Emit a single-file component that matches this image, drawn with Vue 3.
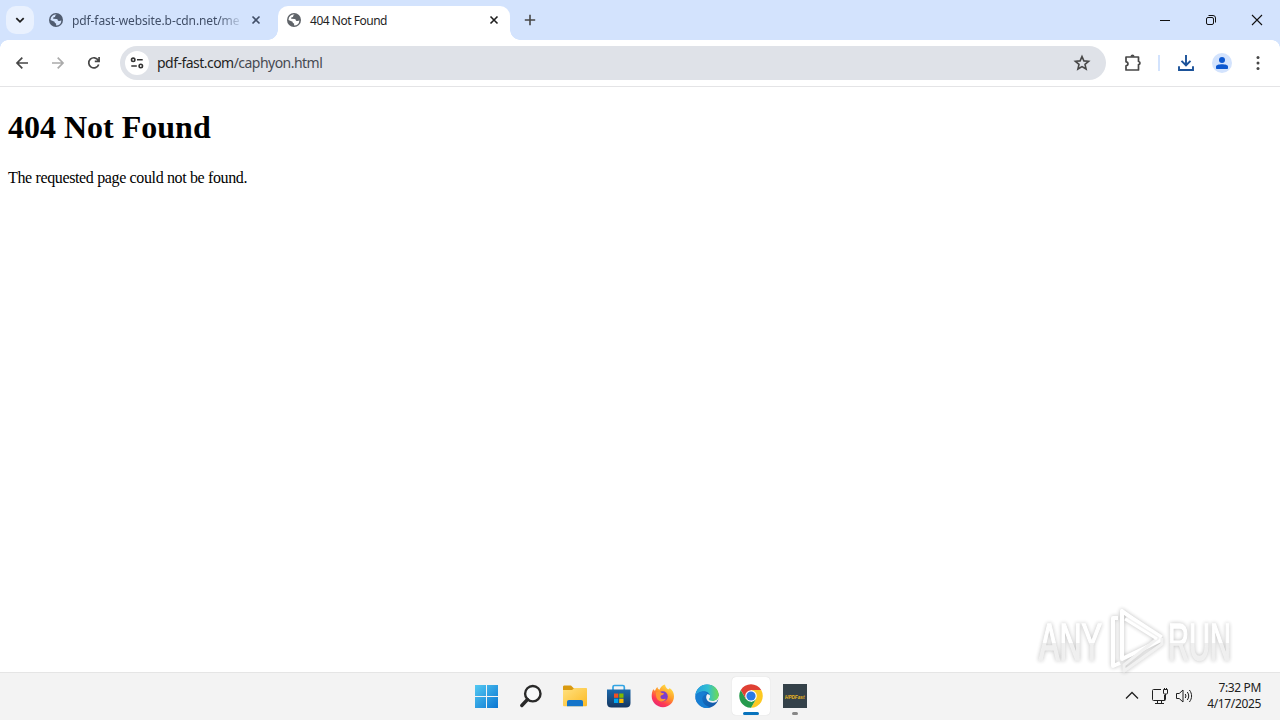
<template>
  <div class="desktop">
    <header class="tab-strip">
      <button class="tab-search">
        <svg width="28" height="28" viewBox="0 0 28 28"><path d="M10.3 12.2 14 15.8l3.7-3.6" fill="none" stroke="#1f1f1f" stroke-width="1.8" /></svg>
      </button>
      <div v-for="tab in tabs" :key="tab.title" class="tab" :class="{ active: tab.active }">
        <svg class="favicon" width="14" height="14" viewBox="0 0 14 14">
          <circle cx="7" cy="7" r="7" :fill="tab.active ? '#5f6368' : '#505c70'" />
          <path d="M7.7 1.5c-1.2.6-1.7 1.3-1.6 2.4l-1.3.4c-.7.2-.8 1-.5 1.5l3.3.3c1 .1 1.3.8 1.3 1.6l1.2.3c.7.2 1.2-.3 2.3-.5a5.5 5.5 0 0 1-5.3 5v-1.9c-1-.2-1.5-.8-1.5-1.8L1.5 6.900a5.500 5.500 0 0 1 6.200-5.400z" :fill="tab.active ? '#fff' : '#d3e3fd'" />
        </svg>
        <span class="title">{{ tab.title }}</span>
        <svg class="close" width="16" height="16" viewBox="0 0 16 16"><path d="m4.500 4.500 7 7m0-7-7 7" stroke-width="1.600" stroke="currentColor" /></svg>
      </div>
      <button class="new-tab">
        <svg width="28" height="28" viewBox="0 0 28 28"><path d="M14 8.800v10.400M8.800 14h10.400" stroke="#474747" stroke-width="1.600" /></svg>
      </button>
      <div class="window-controls">
        <svg width="46" height="40" viewBox="0 0 46 40"><path d="M18 20.500h10" stroke="#111" /></svg>
        <svg width="46" height="40" viewBox="0 0 46 40" fill="none" stroke="#111"><rect x="18.500" y="17.500" width="7" height="7" rx="1.500" /><path d="M20.500 15.500h4.500a2.500 2.500 0 0 1 2.500 2.500v4.500" /></svg>
        <svg width="46" height="40" viewBox="0 0 46 40"><path d="m18 15 10 10m0-10L18 25" stroke="#111" stroke-width="1.100" /></svg>
      </div>
    </header>

    <nav class="toolbar">
      <svg width="36" height="36" viewBox="0 0 36 36" fill="none" stroke="#474747" stroke-width="1.700"><path d="M24 18H13m5.300-5.300L13 18l5.300 5.300" /></svg>
      <svg width="36" height="36" viewBox="0 0 36 36" fill="none" stroke="#ababab" stroke-width="1.700"><path d="M12 18h11m-5.300-5.300L23 18l-5.300 5.300" /></svg>
      <svg width="36" height="36" viewBox="0 0 36 36" fill="none" stroke="#474747" stroke-width="1.700"><path d="M22.700 19.500a5.100 5.100 0 1 1-.4-4.200M23.100 12v4.300h-4.300" /></svg>
      <div class="omnibox">
        <div class="site-info">
          <svg width="24" height="24" viewBox="0 0 24 24" fill="none" stroke="#333" stroke-width="1.600"><circle cx="8.200" cy="8.800" r="1.700" /><path d="M12 8.800h5.700M6.300 15h5.500" /><circle cx="15.800" cy="15" r="1.700" /></svg>
        </div>
        <span class="url">pdf-fast.com<span class="path">/caphyon.html</span></span>
        <svg class="star" width="18" height="18" viewBox="0 0 18 18"><path d="m9 2.600 1.900 4.300 4.700.4-3.600 3.100 1.100 4.600L9 12.600 4.900 15 6 10.400 2.400 7.300l4.700-.4z" fill="none" stroke="#474747" stroke-width="1.600" /></svg>
      </div>
      <svg class="extensions" width="20" height="20" viewBox="0 0 20 20"><path d="M3 4h12.500v4.500c2 .1 2 3 0 3.100v5.400H3v-4.200c2.600-.2 2.600-3.800 0-4z" fill="none" stroke="#474747" stroke-width="1.700" stroke-linejoin="round" /><path d="M7.500 3.700c0-3 4-3 4 0z" fill="#474747" /></svg>
      <span class="divider"></span>
      <svg class="download" width="20" height="20" viewBox="0 0 20 20" fill="none" stroke="#1b5299" stroke-width="1.900"><path d="M10 2v10M5.500 7.900 10 12.300l4.500-4.400M3 13.300V17h14v-3.700" /></svg>
      <svg class="avatar" width="20" height="20" viewBox="0 0 20 20"><circle cx="10" cy="10" r="10" fill="#d3e3fd" /><circle cx="10" cy="7" r="3" fill="#0b57d0" /><path d="M4 15v-1.300c0-3.200 12-3.200 12 0V15c0 .6-.4 1-1 1H5c-.6 0-1-.4-1-1z" fill="#0b57d0" /></svg>
      <svg class="menu" width="20" height="20" viewBox="0 0 20 20" fill="#474747"><circle cx="10" cy="4.600" r="1.500" /><circle cx="10" cy="10" r="1.500" /><circle cx="10" cy="15.400" r="1.500" /></svg>
    </nav>

    <main class="page">
      <h1>404 Not Found</h1>
      <p>The requested page could not be found.</p>
    </main>

    <footer class="taskbar">
      <div class="apps">
        <div class="app">
          <svg width="24" height="24" viewBox="0 0 24 24">
            <defs><linearGradient id="win" x1="0" y1="0" x2="24" y2="24" gradientUnits="userSpaceOnUse"><stop stop-color="#55cbf3" /><stop offset="1" stop-color="#0873d1" /></linearGradient></defs>
            <path d="M0 1h11v11H0zM12 1h11v11H12zM0 13h11v11H0zM12 13h11v11H12z" fill="url(#win)" />
          </svg>
        </div>
        <div class="app">
          <svg width="24" height="24" viewBox="0 0 24 24" fill="none"><circle cx="13.800" cy="9.700" r="7.700" fill="#f7f9fa" stroke="#292929" stroke-width="2.400" /><path d="m8.500 15.500-5.700 6" stroke="#292929" stroke-width="3.400" stroke-linecap="round" /></svg>
        </div>
        <div class="app">
          <svg width="24" height="24" viewBox="0 0 24 24">
            <defs><linearGradient id="folder" x2="1" y2="1"><stop stop-color="#ffe180" /><stop offset="1" stop-color="#fcba24" /></linearGradient></defs>
            <path d="M0 3c0-1 .6-1.500 1.500-1.500h6.500l3 3H23V8H0z" fill="#d99a10" /><path d="M0 6h9l2.500-2H23c.6 0 1 .4 1 1v16c0 .8-.5 1.300-1.200 1.300H1.300C.5 22.300 0 21.800 0 21z" fill="url(#folder)" /><path d="M4 22.300V18c0-1.200.7-2 2-2h12c1.300 0 2 .8 2 2v4.300z" fill="#1474c9" />
          </svg>
        </div>
        <div class="app">
          <svg width="24" height="24" viewBox="0 0 24 24">
            <defs><linearGradient id="store" x2="0" y2="1"><stop stop-color="#1c69ac" /><stop offset="1" stop-color="#153660" /></linearGradient></defs>
            <path d="M6 7V3c0-1 .5-1.500 1.500-1.500h8.300c1 0 1.500.5 1.500 1.500v4" fill="none" stroke="#31a4e4" stroke-width="1.700" /><path d="M0 5.500h23.500V19c0 3-1.600 4.500-4.500 4.500H4.500C1.600 23.500 0 22 0 19z" fill="url(#store)" />
            <path d="M7 9.500h4.300v4.300H7z" fill="#f25022" /><path d="M12.200 9.500h4.300v4.300h-4.300z" fill="#7fba00" /><path d="M7 14.700h4.300V19H7z" fill="#00a4ef" /><path d="M12.200 14.700h4.300V19h-4.300z" fill="#ffb900" />
          </svg>
        </div>
        <div class="app">
          <svg width="24" height="24" viewBox="0 0 24 24">
            <defs><linearGradient id="fox" x1=".85" y1="0" x2=".25" y2="1"><stop stop-color="#fff04a" /><stop offset=".45" stop-color="#ff9929" /><stop offset=".75" stop-color="#ff3b52" /><stop offset="1" stop-color="#e52578" /></linearGradient></defs>
            <path d="M2.500 5c.3 1 .8 1.500 1.500 1.700C5 5 5.200 4 6.500 3c0 1.500.7 2.300 2 2.800 1-2.300 2.500-4.600 5.500-5.300.2 2.400 1.500 3.600 3 4.800 1 .1 1.400-.5 1.500-1.300 3.300 2.300 4.500 5.200 4.500 8.300 0 6.200-4.800 10.900-11 10.900S.7 18.300.7 12.300C.7 9.500 1.300 7 2.500 5z" fill="url(#fox)" /><circle cx="11.700" cy="12.400" r="5.100" fill="#7a3dcd" /><path d="M5 8.500c2-1.400 4-1 6 .5l2 .2c-.2 1.600-1.500 1.700-3.200 2.300-.8 1.800 0 3.500 2 3.500 1.200 0 2-.5 3-.1-1.200 2.300-4.200 3.200-6.700 1.900C5.500 15.500 4.500 12 5 8.500z" fill="#ff9632" />
          </svg>
        </div>
        <div class="app">
          <svg width="24" height="24" viewBox="0 0 24 24">
            <defs>
              <linearGradient id="edge-top" x2="1"><stop stop-color="#259fe1" /><stop offset=".55" stop-color="#31bfd1" /><stop offset="1" stop-color="#70dc4d" /></linearGradient>
              <linearGradient id="edge-side" x2="1" y2="1"><stop stop-color="#1480d8" /><stop offset="1" stop-color="#1453a0" /></linearGradient>
            </defs>
            <circle cx="12" cy="12.300" r="11.700" fill="url(#edge-side)" /><path d="M13.800 15c.3 1.800 3.800 3 7 2.100 1-.3 2.200-1 2.700-1.500l1-3-6-3-6 2z" fill="#f3f3f3" /><path d="M.3 12C1 5.300 5.500.6 12 .6c7 0 11.700 4.800 11.700 10.500 0 3.700-2.700 6-6 6-2.500 0-4-.8-4-1.700 0-.7 1.100-1.200 1.100-3.100 0-2.700-2.300-5-6-5C4.800 7.300 1.600 9.500.3 12z" fill="url(#edge-top)" /><path d="M12.400 10c2.600.8 3 3.200 1.600 4.600-.8 1 .6 2.500 3.700 2.500 2.400 0 4.200-1 5.300-2.700-.5 1.600-1 2.700-1.700 3.600-4.900 2-10-.5-10.100-4.400 0-1.600.4-2.700 1.200-3.600z" fill="#f3f3f3" /><path d="M.6 14.500C.5 10 4.200 7.400 8.200 8c2.200.3 3.700 1.100 4.300 2.200-2.900-.2-5 1.500-5.200 4.100-.2 4.600 3.700 8.300 8.700 8.800-3.700 1.800-8 1-11.300-1.700C2.200 19.400.8 17 .6 14.500z" fill="#177ed3" />
          </svg>
        </div>
        <div class="app current">
          <svg width="24" height="24" viewBox="0 0 24 24">
            <path d="M12 12 1.800 6.100A11.800 11.800 0 0 1 22.200 6.100H12z" fill="#df4034" /><path d="M12 12 22.200 6.100A11.800 11.800 0 0 1 12 23.800L17.100 15z" fill="#fdc921" /><path d="M12 12 12 23.800A11.800 11.800 0 0 1 1.800 6.100L6.900 15z" fill="#269b4d" /><path d="M12 6.100h10.200L17.100 15z" fill="#fdc921" /><path d="m6.900 15 5.100 2.900 5.100-2.900-5.100 8.800z" fill="#269b4d" /><path d="M1.800 6.100 6.900 15 12 6.100z" fill="#df4034" /><circle cx="12" cy="12" r="5.800" fill="#fff" /><circle cx="12" cy="12" r="4.600" fill="#2b7ae4" />
          </svg>
          <span class="indicator"></span>
        </div>
        <div class="app running">
          <svg width="24" height="24" viewBox="0 0 24 24"><rect width="24" height="24" fill="#344149" /><text class="pdf-logo" x="2" y="14.500" textLength="19.500" lengthAdjust="spacingAndGlyphs">HPDFast</text></svg>
          <span class="indicator"></span>
        </div>
      </div>
      <div class="tray">
        <svg width="24" height="24" viewBox="0 0 24 24"><path d="m6 14.500 6-6 6 6" fill="none" stroke="#202020" stroke-width="1.300" /></svg>
        <svg class="network" width="18" height="18" viewBox="0 0 18 18" fill="none" stroke="#202020"><path d="M10 2.500H2.500a1 1 0 0 0-1 1v9a1 1 0 0 0 1 1h11V8M6.500 13.500v2.500m4-2.500v2.500M4 16.500h9" /><path d="M12.500 2.500h4V6a1 1 0 0 1-1 1h-2a1 1 0 0 1-1-1zM14.500 7v5.500a1 1 0 0 1-1 1M13.500 1v1.500m2-1.500v1.500" /></svg>
        <svg class="volume" width="18" height="18" viewBox="0 0 18 18" fill="none" stroke="#202020" stroke-linejoin="round"><path d="M1.500 6.500h2.700L8 3v12l-3.800-3.500H1.500z" /><path d="M10.200 7c.9 1.300.9 2.700 0 4M12.300 5c1.900 2.500 1.900 5.500 0 8M14.400 3c2.900 3.700 2.900 8.300 0 12" /></svg>
        <div class="clock">
          <div>7:32 PM</div>
          <div>4/17/2025</div>
        </div>
      </div>
    </footer>

    <!-- Recording watermark, floats over the page and the taskbar edge -->
    <svg class="watermark" width="220" height="76" viewBox="0 0 220 76">
      <defs>
        <linearGradient id="mark" x1="0" y1="16" x2="0" y2="56" gradientUnits="userSpaceOnUse"><stop offset=".55" stop-color="#fff" /><stop offset=".55" stop-color="#eee" /></linearGradient>
      </defs>
      <text x="8" y="54.500" textLength="63" lengthAdjust="spacingAndGlyphs" fill="url(#mark)" stroke="url(#mark)">ANY</text>
      <g fill="none" stroke="#fff" stroke-width="4" stroke-linejoin="round">
        <path d="M87 13h-5v48l7-3" />
        <path d="M91 6v48l39-19z" />
        <path d="M95 13l32 20-34 27v6l38-27v-6" stroke="#f0f0f0" stroke-width="3" />
        <path d="M91 6l40 26M94 14l32 20" stroke-width="3" />
      </g>
      <text x="137" y="54.500" textLength="63" lengthAdjust="spacingAndGlyphs" fill="url(#mark)" stroke="url(#mark)">RUN</text>
    </svg>
  </div>
</template>

<script setup>
import { ref } from 'vue'

const tabs = ref([
  { title: 'pdf-fast-website.b-cdn.net/me', active: false },
  { title: '404 Not Found', active: true }
])
</script>

<style>
body { margin: 0; overflow: hidden; }
</style>

<style scoped>
.desktop { position: relative; display: flex; flex-direction: column; width: 1280px; height: 720px; background: #fff; font-family: "Noto Sans", sans-serif; }
svg { display: block; flex: none; }
button { border: 0; padding: 0; background: none; }

.tab-strip { display: flex; height: 40px; flex: none; background: #d3e3fd; }
.tab-search { width: 28px; height: 28px; margin: 6px 0 0 6px; border-radius: 10px; background: #e9f1fe; }
.tab { display: flex; align-items: center; box-sizing: border-box; width: 232px; height: 34px; margin-top: 6px; padding: 0 8px 6px 9px; color: #414f68; font-size: 12px; }
.tab:not(.active) { margin-left: 6px; }
.tab.active { position: relative; margin-left: 6px; background: #fff; border-radius: 10px 10px 0 0; color: #1f1f1f; }
.tab.active::before, .tab.active::after { content: ""; position: absolute; bottom: 0; width: 10px; height: 10px; }
.tab.active::before { left: -10px; background: radial-gradient(circle at 0 0, #d3e3fd 9.5px, #fff 10px); }
.tab.active::after { right: -10px; background: radial-gradient(circle at 100% 0, #d3e3fd 9.5px, #fff 10px); }
.favicon { margin-right: 9px; }
.title { width: 168px; white-space: nowrap; }
.tab:not(.active) .title { mask-image: linear-gradient(90deg, #000 146px, transparent 172px); letter-spacing: -0.1px; }
.tab.active .title { letter-spacing: -0.48px; }
.close { margin-left: auto; }
.new-tab { width: 28px; height: 28px; margin: 6px 0 0 6px; }
.window-controls { display: flex; margin-left: auto; }

.toolbar { display: flex; align-items: center; box-sizing: border-box; height: 47px; flex: none; padding: 0 12px 0 4px; background: #fff; border-bottom: 1px solid #e4e4e6; position: relative; }
.toolbar::before, .toolbar::after { content: ""; position: absolute; top: 0; width: 8px; height: 8px; }
.toolbar::before { left: 0; background: radial-gradient(circle at 100% 100%, #fff 7.5px, #d3e3fd 8px); }
.toolbar::after { right: 0; background: radial-gradient(circle at 0 100%, #fff 7.5px, #d3e3fd 8px); }
.omnibox { display: flex; align-items: center; box-sizing: border-box; width: 986px; height: 34px; margin-left: 8px; padding: 0 15px 0 5px; border-radius: 17px; background: #dfe2e8; }
.site-info { display: flex; border-radius: 50%; background: #fff; }
.url { margin-left: 8px; color: #1f1f1f; font-size: 14px; line-height: 20px; letter-spacing: -0.53px; white-space: nowrap; }
.path { color: #474a52; }
.star { margin-left: auto; }
.extensions { margin-left: 17px; }
.divider { width: 2px; height: 16px; margin-left: 15px; background: #d3e3fd; }
.download { margin-left: 16px; }
.avatar, .menu { margin-left: 16px; }

.page { flex: 1; padding: 0 8px; color: #000; font-family: "Liberation Serif", serif; font-size: 16px; }
h1 { margin: 21px 0; font-size: 32px; line-height: 38px; }
p { margin: 0; line-height: 22px; letter-spacing: -0.36px; }

.taskbar { display: flex; justify-content: space-between; box-sizing: border-box; height: 48px; flex: none; padding-left: 465px; background: #f3f3f3; border-top: 1px solid #e5e5e5; }
.apps { display: flex; padding-top: 4px; }
.app { display: flex; flex-direction: column; align-items: center; box-sizing: border-box; width: 38px; height: 38px; margin: 0 3px; padding-top: 7px; border-radius: 4px; }
.app.current { background: #fff; box-shadow: 0 0 1px #c8c8c8; }
.indicator { width: 6px; height: 3px; margin-top: 4px; border-radius: 2px; background: #878787; }
.current .indicator { width: 16px; background: #0873bd; }
.pdf-logo { font: italic bold 6px "Liberation Sans", sans-serif; fill: #edb81d; }
.tray { display: flex; align-items: center; padding: 0 19px 1px 0; }
.network { margin-left: 7px; }
.volume { margin-left: 6px; }
.clock { width: 68px; color: #202020; font-size: 12px; line-height: 16px; text-align: right; letter-spacing: -0.35px; }

.watermark { position: absolute; left: 1031px; top: 605px; filter: drop-shadow(0 0 2px rgba(0, 0, 0, 0.28)); opacity: 0.9; }
.watermark text { font: 51px "Liberation Sans", sans-serif; stroke-width: 1.5px; }
</style>
